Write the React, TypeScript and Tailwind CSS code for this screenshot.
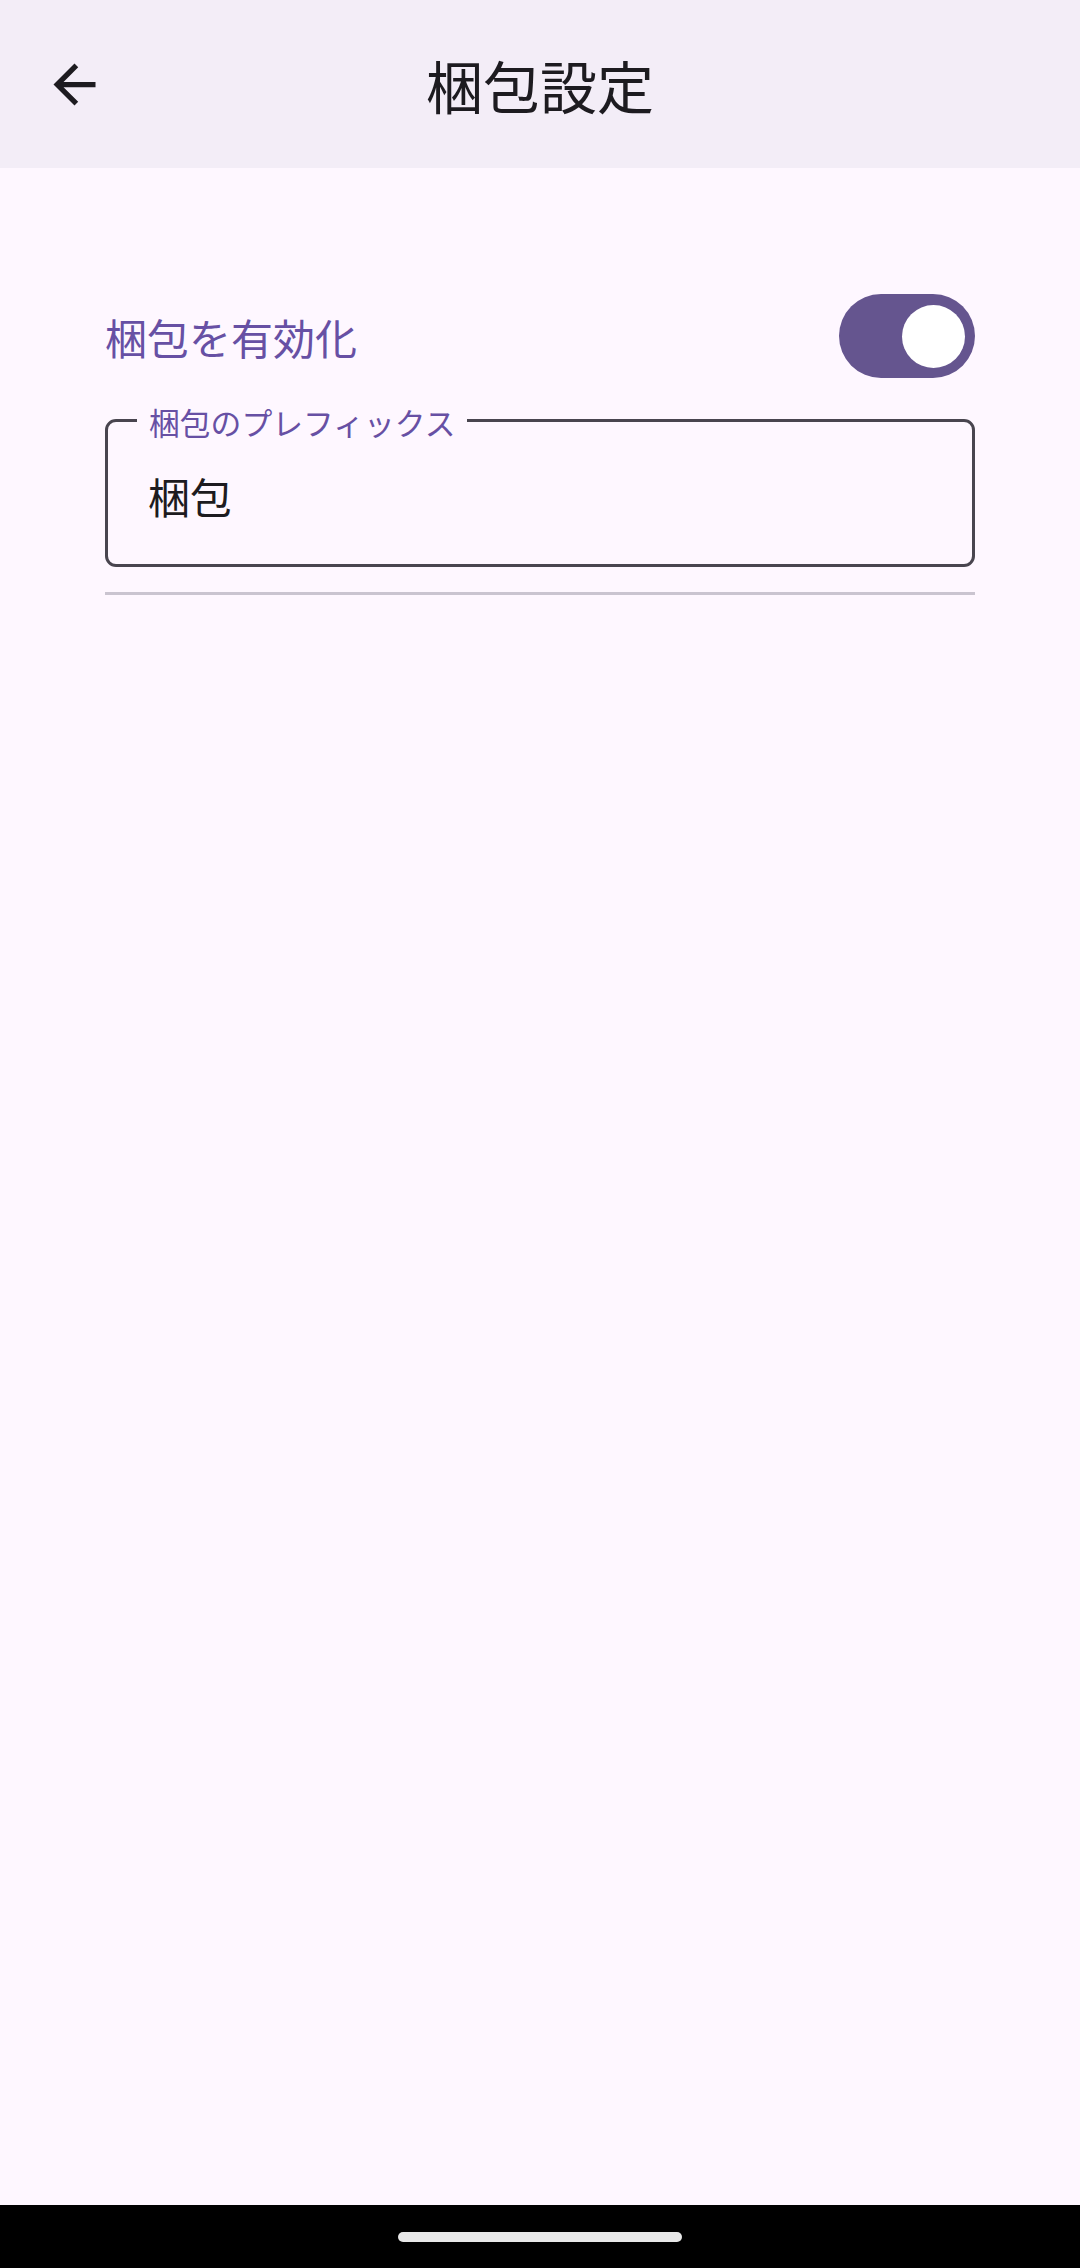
import { useState } from "react";

const font = { fontFamily: '"Noto Sans CJK JP", "Noto Sans", sans-serif' };

function BackArrow() {
  return (
    <svg width="63" height="63" viewBox="0 0 24 24" fill="#1d1b20">
      <path d="M20 11H7.83l5.59-5.59L12 4l-8 8 8 8 1.41-1.41L7.83 13H20v-2z" />
    </svg>
  );
}

function Toggle({ checked, onChange }: { checked: boolean; onChange: (v: boolean) => void }) {
  return (
    <button
      onClick={() => onChange(!checked)}
      className={`flex items-center w-[136px] h-[84px] rounded-full px-[10px] ${
        checked ? "bg-[#65558f] justify-end" : "bg-[#e6e0e9] border-[5px] border-[#79747e] justify-start"
      }`}
    >
      <span className={`block rounded-full ${checked ? "w-[63px] h-[63px] bg-white" : "w-[42px] h-[42px] bg-[#79747e]"}`} />
    </button>
  );
}

export default function App() {
  const [enabled, setEnabled] = useState(true);
  const [prefix, setPrefix] = useState("梱包");

  return (
    <div className="w-[1080px] h-[2268px] flex flex-col bg-[#fef7ff]" style={font}>
      {/* Top App Bar */}
      <div className="relative h-[168px] flex-shrink-0 bg-[#f3edf7] flex items-center justify-center">
        <button className="absolute left-[43px] top-[53px]">
          <BackArrow />
        </button>
        <h1 className="text-[57px] leading-none text-[#1d1b20] font-normal">梱包設定</h1>
      </div>

      {/* Content */}
      <div className="flex-1 px-[105px]">
        <div className="mt-[126px] flex items-center justify-between h-[84px]">
          <span className="text-[42px] leading-none text-[#6750a4] pt-[2px]">梱包を有効化</span>
          <Toggle checked={enabled} onChange={setEnabled} />
        </div>

        {/* Prefix field */}
        <div className="relative mt-[41px] h-[148px] border-[3px] border-[#49454f] rounded-[11px] flex items-center">
          <label className="absolute left-[29px] top-[-16px] px-[12px] bg-[#fef7ff] text-[30.8px] leading-[31.5px] text-[#6750a4]">
            梱包のプレフィックス
          </label>
          <input
            value={prefix}
            onChange={(e) => setPrefix(e.target.value)}
            className="w-full bg-transparent outline-none pl-[40px] pt-[4px] text-[42px] leading-none text-[#1d1b20]"
            style={font}
          />
        </div>

        <div className="mt-[25px] h-[3px] bg-[#cac4d0]" />
      </div>

      {/* System navigation bar */}
      <div className="h-[63px] flex-shrink-0 bg-black flex items-center justify-center">
        <div className="w-[284px] h-[10px] rounded-full bg-[#e8e8e8]" />
      </div>
    </div>
  );
}
